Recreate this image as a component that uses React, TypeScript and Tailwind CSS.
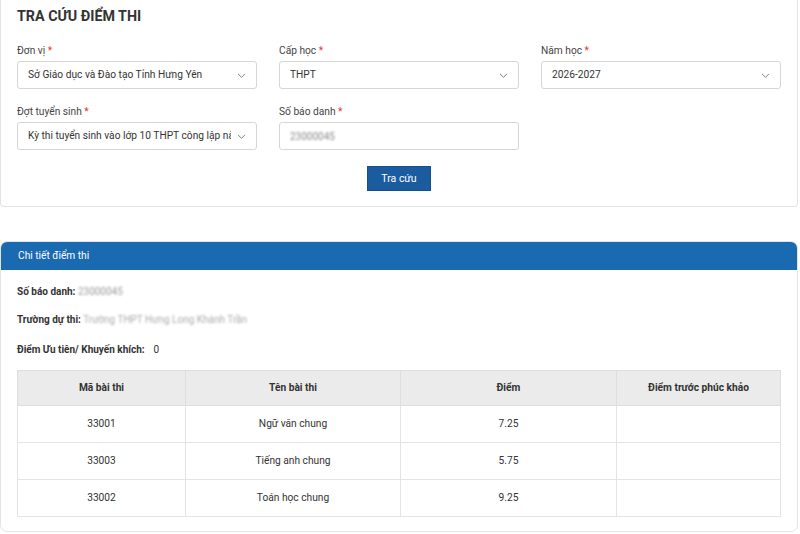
import React from 'react';

const font = { fontFamily: 'Roboto, "Noto Sans", sans-serif' };

const Label: React.FC<{ text: string }> = ({ text }) => (
  <div className="text-[10.2px] leading-[12px] text-[#444] mb-[4px]">
    {text} <span className="text-[#e53935]">*</span>
  </div>
);

const Chevron = () => (
  <svg width="11" height="11" viewBox="0 0 12 12" fill="none" stroke="#777" strokeWidth="1" strokeLinecap="round">
    <path d="M2.5 4.5L6 8l3.5-3.5" />
  </svg>
);

const SelectBox: React.FC<{ value: string }> = ({ value }) => (
  <div className="h-[28px] border border-[#d6d6d6] rounded-[3px] flex items-center justify-between pl-[10px] pr-[9px] bg-white">
    <span className="text-[10.2px] text-[#333] whitespace-nowrap overflow-hidden mr-[5px]">{value}</span>
    <span className="shrink-0 flex">
      <Chevron />
    </span>
  </div>
);

const rows = [
  { code: '33001', name: 'Ngữ văn chung', score: '7.25' },
  { code: '33003', name: 'Tiếng anh chung', score: '5.75' },
  { code: '33002', name: 'Toán học chung', score: '9.25' },
];

export default function App() {
  return (
    <div className="w-[800px] h-[534px] bg-white overflow-hidden" style={font}>
      <div className="w-[798px] border border-t-0 border-[#e3e3e3] rounded-b-[4px] px-4 pt-[7px] pb-[15px]">
        <h1 className="text-[14.3px] leading-[18px] font-bold text-[#333] mb-[20px]">TRA CỨU ĐIỂM THI</h1>
        <div className="grid grid-cols-3 gap-x-[22px] gap-y-[17px]">
          <div>
            <Label text="Đơn vị" />
            <SelectBox value="Sở Giáo dục và Đào tạo Tỉnh Hưng Yên" />
          </div>
          <div>
            <Label text="Cấp học" />
            <SelectBox value="THPT" />
          </div>
          <div>
            <Label text="Năm học" />
            <SelectBox value="2026-2027" />
          </div>
          <div>
            <Label text="Đợt tuyển sinh" />
            <SelectBox value="Kỳ thi tuyển sinh vào lớp 10 THPT công lập năm 2026-2027" />
          </div>
          <div>
            <Label text="Số báo danh" />
            <div className="h-[28px] border border-[#d6d6d6] rounded-[3px] flex items-center px-[10px]">
              <span className="text-[10px] text-[#888] blur-[1px]">23000045</span>
            </div>
          </div>
        </div>
        <div className="flex justify-center mt-[16px]">
          <button className="w-[64px] h-[25px] bg-[#1b5c9f] border border-[#164f8a] text-white text-[10.5px]">
            Tra cứu
          </button>
        </div>
      </div>

      <div className="w-[798px] mt-[34px] border border-[#e3e3e3] rounded-[7px] overflow-hidden">
        <div className="h-[28px] bg-[#1a6ab1] flex items-center pl-[17px] text-white text-[10.2px]">
          Chi tiết điểm thi
        </div>
        <div className="px-4 pt-[15px] pb-[14px]">
          <div className="text-[10px] text-[#333] h-[14px] leading-[14px]">
            <span className="font-bold">Số báo danh:</span>{' '}
            <span className="text-[#999] blur-[1px]">23000045</span>
          </div>
          <div className="text-[10px] text-[#333] h-[14px] leading-[14px] mt-[14px]">
            <span className="font-bold">Trường dự thi:</span>{' '}
            <span className="text-[#aaa] blur-[1.1px]">Trường THPT Hưng Long Khánh Trần</span>
          </div>
          <div className="text-[10px] text-[#333] h-[14px] leading-[14px] mt-[16px]">
            <span className="font-bold">Điểm Ưu tiên/ Khuyến khích:</span>
            <span className="ml-[9px]">0</span>
          </div>
          <table className="w-full mt-[13px] border-collapse text-[10.2px] text-[#333] table-fixed">
            <colgroup>
              <col className="w-[168px]" />
              <col className="w-[215px]" />
              <col className="w-[216px]" />
              <col />
            </colgroup>
            <thead>
              <tr className="bg-[#ebebeb] h-[35px]">
                <th className="font-bold border border-[#dedede] text-center">Mã bài thi</th>
                <th className="font-bold border border-[#dedede] text-center">Tên bài thi</th>
                <th className="font-bold border border-[#dedede] text-center">Điểm</th>
                <th className="font-bold border border-[#dedede] text-center">Điểm trước phúc khảo</th>
              </tr>
            </thead>
            <tbody>
              {rows.map((r) => (
                <tr key={r.code} className="h-[37px]">
                  <td className="border border-[#e4e4e4] text-center">{r.code}</td>
                  <td className="border border-[#e4e4e4] text-center">{r.name}</td>
                  <td className="border border-[#e4e4e4] text-center">{r.score}</td>
                  <td className="border border-[#e4e4e4]"></td>
                </tr>
              ))}
            </tbody>
          </table>
        </div>
      </div>
    </div>
  );
}
